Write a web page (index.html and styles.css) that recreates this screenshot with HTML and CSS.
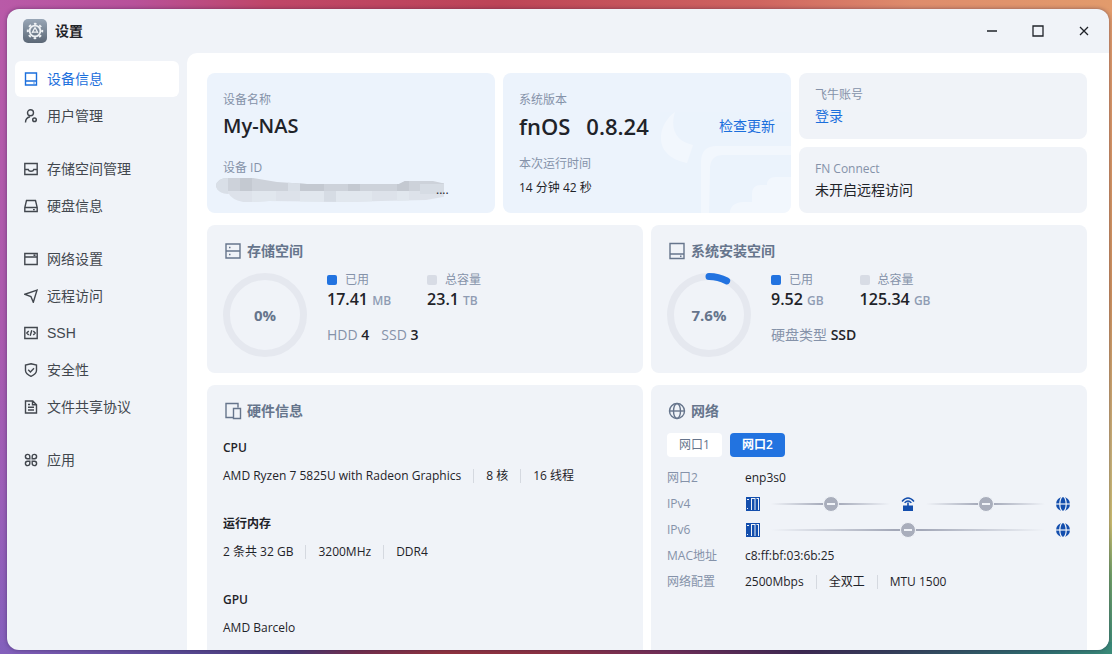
FILE: index.html
```html
<!DOCTYPE html>
<html lang="zh-CN">
<head>
<meta charset="utf-8">
<title>设置</title>
<link rel="stylesheet" href="styles.css">
</head>
<body class="desktop">
<div class="window">
  <header class="titlebar">
    <svg class="app-icon" viewBox="0 0 24 24" aria-hidden="true">
      <defs><linearGradient id="app-bg" x1="0" y1="0" x2="0" y2="1"><stop offset="0" stop-color="#98a6b6"/><stop offset="1" stop-color="#5b6776"/></linearGradient></defs>
      <rect width="24" height="24" rx="5" fill="url(#app-bg)"/>
      <circle cx="12" cy="12" r="7.2" fill="none" stroke="#eef1f4" stroke-width="2" stroke-dasharray="2.6 3.05" stroke-dashoffset="1.3"/>
      <circle cx="12" cy="12" r="5.4" fill="none" stroke="#eef1f4" stroke-width="1.8"/>
      <path d="M12 8.5 9 14M12 8.5l3 5.5M9.6 13.2h4.8" fill="none" stroke="#eef1f4" stroke-width="1.3"/>
    </svg>
    <h1 class="window-title">设置</h1>
    <div class="window-controls">
      <button class="control" aria-label="最小化"><svg viewBox="0 0 12 12"><path d="M1 6h10"/></svg></button>
      <button class="control" aria-label="最大化"><svg viewBox="0 0 12 12"><path d="M1 1h10v10H1z"/></svg></button>
      <button class="control" aria-label="关闭"><svg viewBox="0 0 12 12"><path d="M2 2l8 8M10 2l-8 8"/></svg></button>
    </div>
  </header>
  <div class="body">
    <nav class="sidebar">
      <div class="nav-group">
        <button class="nav-item active"><svg viewBox="0 0 14 14"><path d="M1.5 1h11v12h-11zM1.5 9h11M9.5 11h1"/></svg>设备信息</button>
        <button class="nav-item"><svg viewBox="0 0 14 14"><circle cx="6.500" cy="3.800" r="3"/><path d="M1.500 13.500c0-3.300 1.600-5 4.500-5.700"/><circle cx="10.500" cy="10.800" r="1.800" stroke-width="1.500"/></svg>用户管理</button>
      </div>
      <div class="nav-group">
        <button class="nav-item"><svg viewBox="0 0 14 14"><path d="M.8 1.500h12.400v11H.8zM.8 7.500h3.400c.6 2.400 5 2.400 5.600 0h3.400"/></svg>存储空间管理</button>
        <button class="nav-item"><svg viewBox="0 0 14 14"><path d="M2.500 1.500h9l1.700 7v4H.8v-4zM.8 8.500h12.400M9 10.600h1.800"/></svg>硬盘信息</button>
      </div>
      <div class="nav-group">
        <button class="nav-item"><svg viewBox="0 0 14 14"><path d="M.8 1.500h12.400v11H.8zM.8 5h12.400M9.500 3.200h2"/></svg>网络设置</button>
        <button class="nav-item"><svg viewBox="0 0 14 14"><path d="M13 1.200.9 5.300l6 2.300 2.400 5.700z"/></svg>远程访问</button>
        <button class="nav-item"><svg viewBox="0 0 14 14"><path d="M.8 1.500h12.400v11H.8zM4.700 5 2.800 7l1.900 2M9.300 5l1.900 2-1.900 2M7.800 4.300 6.200 9.700"/></svg>SSH</button>
        <button class="nav-item"><svg viewBox="0 0 14 14"><path d="M7 .8 12.500 2v5.600c0 2.700-2.500 4.400-5.500 5.700-3-1.300-5.500-3-5.500-5.700V2zM4.200 6.800l2.200 2.100 3.600-3.600"/></svg>安全性</button>
        <button class="nav-item"><svg viewBox="0 0 14 14"><path d="M1.500 1h7.300l3.700 3.700V13h-11zM4 7.300h6M4 10h6M4 4.500h2M8.500 1.200v3.600h3.800"/></svg>文件共享协议</button>
      </div>
      <div class="nav-group">
        <button class="nav-item"><svg viewBox="0 0 14 14"><path d="M5.800 5.800H3.500a2.200 2.200 0 1 1 2.300-2.300zM8.200 5.800h2.300a2.200 2.200 0 1 0-2.300-2.300zM5.800 8.200H3.500a2.200 2.200 0 1 0 2.300 2.300zM8.200 8.200h2.300a2.200 2.200 0 1 1-2.300 2.300z"/></svg>应用</button>
      </div>
    </nav>

    <main class="content">
      <div class="top-row">
        <section class="card tinted">
          <p class="label">设备名称</p>
          <p class="device-name">My-NAS</p>
          <p class="label spaced-lg">设备 ID</p>
          <p class="device-id">
            <svg class="mosaic" viewBox="0 0 228 24" aria-hidden="true">
              <clipPath id="smear"><path d="M0 8Q1 0 12 0h25l24 4 30 2h92l6-3h28l14 3 8 9-12 4-17 3-45 1-32 1-80-1-15 1H27Q15 21 13 16 1 15 0 8z"/></clipPath>
              <g clip-path="url(#smear)">
                <path fill="#cdd2da" d="M0 0h228v13H0z"/>
                <path fill="#dde2ea" d="M0 13h228v11H0z"/>
                <path fill="#d9dfe7" d="M0 0h12v24H0zM72 0h12v13H72z"/>
                <path fill="#c4c9d1" d="M24 0h12v13H24zM84 0h24v13H84zM132 0h12v13h-12zM181 0h12v13h-12z"/>
                <path fill="#e1e7ee" d="M36 13h24v11H36zM84 13h24v11H84zM120 13h36v11h-36zM181 13h12v11h-12z"/>
                <path fill="#d6dce4" d="M108 13h12v11h-12zM204 6h24v10h-24z"/>
              </g>
            </svg><span>....</span>
          </p>
        </section>

        <section class="card tinted version">
          <svg class="emblem" viewBox="0 0 130 102" aria-hidden="true">
            <path d="M14 1C-1 12-4 31 5 41c6 7 13 9 21 11l6-18C17 31 8 20 14 1z"/>
            <path fill-rule="evenodd" d="M40 102V51q0-16 16-16h74v9H62q-12 0-13 12l-1 46z"/>
            <path d="M69 102c0-6 4-11 14-11h8V83q0-9 9-9h6q0-8 9-8h15v36z"/>
          </svg>
          <p class="label">系统版本</p>
          <p class="version-line"><span>fnOS</span><span>0.8.24</span><a class="link" href="#update">检查更新</a></p>
          <p class="label spaced-md">本次运行时间</p>
          <p class="uptime">14 分钟 42 秒</p>
        </section>

        <div class="stack">
          <section class="card compact">
            <p class="label">飞牛账号</p>
            <p class="value"><a class="link" href="#login">登录</a></p>
          </section>
          <section class="card compact">
            <p class="label">FN Connect</p>
            <p class="value">未开启远程访问</p>
          </section>
        </div>
      </div>

      <div class="pair-row">
        <section class="card">
          <h2 class="card-title"><svg viewBox="0 0 18 18"><path d="M2 2h14v14H2zM2 9h14M5 5.500h1.500M5 12.500h1.500"/></svg>存储空间</h2>
          <div class="usage">
            <div class="ring">
              <svg viewBox="0 0 84 84"><circle class="track" cx="42" cy="42" r="38.500"/></svg>
              <span class="percent">0%</span>
            </div>
            <div class="facts">
              <dl class="metrics">
                <div><dt><i class="swatch used"></i>已用</dt><dd>17.41 <small>MB</small></dd></div>
                <div><dt><i class="swatch total"></i>总容量</dt><dd>23.1 <small>TB</small></dd></div>
              </dl>
              <p class="disks"><span>HDD <b>4</b></span><span>SSD <b>3</b></span></p>
            </div>
          </div>
        </section>
        <section class="card">
          <h2 class="card-title"><svg viewBox="0 0 18 18"><path d="M2 1.500h14v15H2zM2 12h14M12 14.300h1.500"/></svg>系统安装空间</h2>
          <div class="usage">
            <div class="ring">
              <svg viewBox="0 0 84 84"><circle class="track" cx="42" cy="42" r="38.500"/><circle class="arc" cx="42" cy="42" r="38.500" pathLength="100" stroke-dasharray="7.600 92.400" transform="rotate(-90 42 42)"/></svg>
              <span class="percent">7.6%</span>
            </div>
            <div class="facts">
              <dl class="metrics">
                <div><dt><i class="swatch used"></i>已用</dt><dd>9.52 <small>GB</small></dd></div>
                <div><dt><i class="swatch total"></i>总容量</dt><dd>125.34 <small>GB</small></dd></div>
              </dl>
              <p class="disks"><span>硬盘类型 <b>SSD</b></span></p>
            </div>
          </div>
        </section>
      </div>

      <div class="pair-row tall">
        <section class="card">
          <h2 class="card-title"><svg viewBox="0 0 18 18"><path d="M9 15.500H2v-14h12v4M9.500 6.500h7v10h-7z"/></svg>硬件信息</h2>
          <div class="hardware">
            <div><h3>CPU</h3><p class="split"><span>AMD Ryzen 7 5825U with Radeon Graphics</span><span>8 核</span><span>16 线程</span></p></div>
            <div><h3>运行内存</h3><p class="split"><span>2 条共 32 GB</span><span>3200MHz</span><span>DDR4</span></p></div>
            <div><h3>GPU</h3><p class="split"><span>AMD Barcelo</span></p></div>
          </div>
        </section>
        <section class="card">
          <h2 class="card-title"><svg viewBox="0 0 18 18"><circle cx="9" cy="9" r="7.500"/><ellipse cx="9" cy="9" rx="3.500" ry="7.500"/><path d="M1.500 9h15"/></svg>网络</h2>
          <div class="tabs">
            <button class="tab">网口1</button>
            <button class="tab selected">网口2</button>
          </div>
          <dl class="net">
            <dt>网口2</dt><dd>enp3s0</dd>
            <dt>IPv4</dt>
            <dd class="route">
              <svg class="node" viewBox="0 0 16 16"><path d="M1 1h14v14H1z"/><path class="slot" d="M6 2h1v12H6zM7 2h3v1H7zM9.500 2h1v12h-1zM11.500 2h2.500v12h-1V3h-1.500zM2 3h2v1H2zM2 12h1v1H2z"/></svg>
              <span class="line"><i class="blocked"></i></span>
              <svg class="node" viewBox="0 0 16 16"><path d="M3 9.500h10V15H3zM7.200 6.500h1.600V10H7.200z"/><path class="wave" d="M2 5.500Q8-1.500 14 5.500M4.600 6.900q3.400-3.700 6.800 0"/></svg>
              <span class="line"><i class="blocked"></i></span>
              <svg class="node" viewBox="0 0 16 16"><circle cx="8" cy="8" r="7"/><path class="cut" d="M.5 8h15"/><ellipse class="cut" cx="8" cy="8" rx="3.200" ry="7.500"/></svg>
            </dd>
            <dt>IPv6</dt>
            <dd class="route">
              <svg class="node" viewBox="0 0 16 16"><path d="M1 1h14v14H1z"/><path class="slot" d="M6 2h1v12H6zM7 2h3v1H7zM9.500 2h1v12h-1zM11.500 2h2.500v12h-1V3h-1.500zM2 3h2v1H2zM2 12h1v1H2z"/></svg>
              <span class="line"><i class="blocked"></i></span>
              <svg class="node" viewBox="0 0 16 16"><circle cx="8" cy="8" r="7"/><path class="cut" d="M.5 8h15"/><ellipse class="cut" cx="8" cy="8" rx="3.200" ry="7.500"/></svg>
            </dd>
            <dt>MAC地址</dt><dd>c8:ff:bf:03:6b:25</dd>
            <dt>网络配置</dt><dd class="split"><span>2500Mbps</span><span>全双工</span><span>MTU 1500</span></dd>
          </dl>
        </section>
      </div>
    </main>
  </div>
</div>
</body>
</html>
```

FILE: styles.css
```css
* { box-sizing: border-box; }

h1, h2, h3, p, dl, dd { margin: 0; }

button { border: 0; background: none; font: inherit; color: inherit; cursor: pointer; }

svg { flex: none; fill: none; stroke: currentColor; }

.desktop {
  margin: 0;
  height: 100vh;
  padding: 9px 3px 4px 7px;
  display: flex;
  font: 12px/20px "Open Sans", "Noto Sans CJK SC", sans-serif;
  color: #1f2329;
  background:
    linear-gradient(90deg, #b95aa8, #b8519a 12%, #bf4668 24%, #bd4457 45%, #cf6460 68%, #de8c6c 82%, #e29b6c) top / 100% 12px no-repeat,
    linear-gradient(90deg, #8460bc, #5b4b96 16%, #493a78 26%, #74304f 32%, #93343f 40%, #8e3344 50%, #74305a 60%, #402b54 72%, #37405c 80%, #2f6f70 94%, #3a8a78) bottom / 100% 12px no-repeat,
    linear-gradient(180deg, #b95aa8, #ab5aae 50%, #9c5fb8 75%, #8460bc) left / 50% 100% no-repeat,
    linear-gradient(180deg, #e29b6c, #d2945f 45%, #cdb47a 70%, #cfc070 80%, #73a468 88%, #3a8a78) right / 50% 100% no-repeat;
}

.window {
  flex: 1;
  display: flex;
  flex-direction: column;
  min-width: 0;
  overflow: hidden;
  border-radius: 12px;
  background: #f0f3f8;
  box-shadow: 0 0 4px rgba(30, 20, 60, .45);
}

.titlebar {
  display: flex;
  align-items: center;
  height: 44px;
  flex: none;
  padding: 0 2px 0 16px;
  gap: 8px;
}

.app-icon { width: 24px; height: 24px; stroke: none; }
.window-title { font-size: 14px; font-weight: 600; }
.window-controls { display: flex; margin-left: auto; }
.control { width: 46px; height: 32px; padding: 0; display: grid; place-items: center; }
.control svg { width: 12px; height: 12px; stroke-width: 1.3; }

.body { flex: 1; display: flex; min-height: 0; }

.sidebar {
  flex: none;
  width: 180px;
  padding: 8px;
  display: flex;
  flex-direction: column;
  gap: 17px;
  font: 14px/20px "Liberation Sans", "Noto Sans CJK SC", sans-serif;
  color: #42474e;
}

.nav-group { display: flex; flex-direction: column; gap: 1px; }

.nav-item {
  display: flex;
  align-items: center;
  gap: 9px;
  height: 36px;
  padding: 0 9px;
  border-radius: 6px;
  text-align: left;
}

.nav-item svg { width: 14px; height: 14px; stroke-width: 1.4; }
.nav-item.active { background: #fff; color: #1b6fdc; }

.content {
  flex: 1;
  min-width: 0;
  overflow-y: auto;
  scrollbar-width: none;
  padding: 20px 22px 20px 20px;
  display: flex;
  flex-direction: column;
  gap: 12px;
  background: #fff;
  border-top-left-radius: 10px;
}

.top-row { display: grid; grid-template-columns: repeat(3, 1fr); gap: 8px; }
.pair-row { display: grid; grid-template-columns: 1fr 1fr; gap: 8px; }
.tall { flex: none; min-height: 320px; }
.stack { display: grid; gap: 8px; }

.card { padding: 16px; border-radius: 8px; background: #f0f3f8; }
.tinted { padding: 17px 16px 11px; background: #ecf3fc; }
.compact { padding: 12px 16px; }

.label { color: #8592a9; }
.link { color: #1b6fdc; font-size: 14px; font-weight: 400; text-decoration: none; }
.value { font-size: 14px; line-height: 22px; }
.spaced-lg { margin-top: 16px; }
.spaced-md { margin-top: 12px; }

.device-name { font-size: 20px; line-height: 32px; font-weight: 600; }
.device-id { display: flex; align-items: center; height: 24px; margin-left: -7px; }
.mosaic { width: 228px; height: 24px; margin-right: -8px; stroke: none; }

.version { position: relative; overflow: hidden; }
.emblem { position: absolute; right: 0; bottom: 0; width: 130px; height: 102px; fill: #fff; stroke: none; opacity: .35; }
.version-line { position: relative; display: flex; align-items: center; gap: 16px; font-size: 22px; line-height: 32px; font-weight: 600; }
.version-line .link { margin-left: auto; line-height: 30px; }
.uptime { line-height: 28px; }

.card-title { display: flex; align-items: center; gap: 5px; padding-left: 1px; font-size: 14px; line-height: 20px; font-weight: 600; color: #66758c; }
.card-title svg { width: 18px; height: 18px; stroke-width: 1.4; }

.usage { display: flex; gap: 20px; margin-top: 12px; }
.ring { display: grid; place-items: center; width: 84px; height: 84px; }
.ring svg, .percent { grid-area: 1 / 1; }
.track { stroke: #e5e8ef; stroke-width: 7; }
.arc { stroke: #2273e0; stroke-width: 7; stroke-linecap: round; }
.percent { font-size: 15px; font-weight: 700; color: #66758c; }

.metrics { display: flex; gap: 36px; }
.metrics dt { display: flex; align-items: center; gap: 8px; line-height: 14px; color: #8592a9; }
.metrics dd { font-size: 16px; line-height: 24px; font-weight: 600; }
.metrics small { font-size: 12px; color: #8f9cb3; }
.swatch { width: 10px; height: 10px; border-radius: 2px; }
.used { background: #2273e0; }
.total { background: #d8dce5; }
.disks { display: flex; gap: 12px; margin-top: 12px; font-size: 14px; line-height: 20px; color: #8592a9; }
.disks b { font-weight: 600; color: #1f2329; }

.hardware { display: grid; gap: 26px; margin-top: 16px; }
.hardware h3 { font-size: 12px; line-height: 22px; font-weight: 600; }
.hardware p { min-height: 22px; margin-top: 6px; }

.split { display: flex; align-items: center; }
.split span { line-height: 14px; }
.split span + span { margin-left: 12px; padding-left: 12px; border-left: 1px solid #d5d9e0; }

.tabs { display: flex; gap: 8px; margin-top: 12px; }
.tab { height: 24px; padding: 0 12px; border-radius: 4px; background: #fff; color: #66758c; }
.tab.selected { background: #2273e0; color: #fff; font-weight: 600; }

.net { display: grid; grid-template-columns: 78px 1fr; margin-top: 8px; line-height: 26px; }
.net dt { color: #8592a9; }

.route { display: flex; align-items: center; gap: 10px; }
.node { width: 16px; height: 16px; fill: #134ead; stroke: none; }
.slot { fill: #f0f3f8; }
.cut { fill: none; stroke: #f0f3f8; stroke-width: 1.2; }
.wave { fill: none; stroke: #134ead; stroke-width: 1.4; }
.line { flex: 1; display: flex; align-items: center; justify-content: center; height: 18px; background: linear-gradient(90deg, transparent, #a3a8b8 45%, #a3a8b8 55%, transparent) center / 100% 2px no-repeat; }
.blocked { display: grid; place-items: center; width: 16px; height: 16px; border: 1px solid #f0f3f8; border-radius: 50%; background: #a9aebc; }
.blocked::before { content: ""; width: 8px; height: 2px; background: #f0f3f8; }
```
